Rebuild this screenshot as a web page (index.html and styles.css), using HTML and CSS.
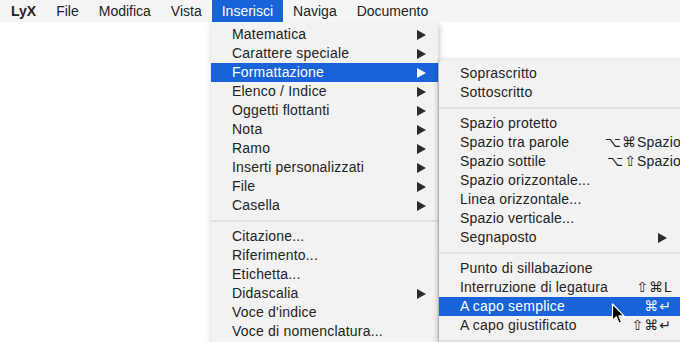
FILE: index.html
```html
<!DOCTYPE html>
<html>

<head>
  <meta charset="UTF-8">
  <title>LyX - Inserisci</title>
  <link rel="stylesheet" href="styles.css">
</head>

<body>
  <div class="menubar">
    <span class="mb-item app">LyX</span>
    <span class="mb-item">File</span>
    <span class="mb-item">Modifica</span>
    <span class="mb-item">Vista</span>
    <span class="mb-item open">Inserisci</span>
    <span class="mb-item">Naviga</span>
    <span class="mb-item">Documento</span>
  </div>

  <div class="stage">
    <div class="menu main">
      <div class="item sub">Matematica</div>
      <div class="item sub">Carattere speciale</div>
      <div class="item sub active">Formattazione
        <div class="menu submenu">
          <div class="item">Soprascritto</div>
          <div class="item">Sottoscritto</div>
          <div class="sep"></div>
          <div class="item">Spazio protetto</div>
          <div class="item">Spazio tra parole <span class="sc long"><span class="glyph">⌥⌘</span>Spazio</span></div>
          <div class="item">Spazio sottile <span class="sc long"><span class="glyph">⌥⇧</span>Spazio</span></div>
          <div class="item">Spazio orizzontale...</div>
          <div class="item">Linea orizzontale...</div>
          <div class="item">Spazio verticale...</div>
          <div class="item sub">Segnaposto</div>
          <div class="sep"></div>
          <div class="item">Punto di sillabazione</div>
          <div class="item">Interruzione di legatura <span class="sc"><span class="glyph">⇧⌘</span>L</span></div>
          <div class="item active">A capo semplice <span class="sc"><span class="glyph">⌘↵</span></span></div>
          <div class="item">A capo giustificato <span class="sc"><span class="glyph">⇧⌘↵</span></span></div>
          <div class="sep"></div>
        </div>
      </div>
      <div class="item sub">Elenco / Indice</div>
      <div class="item sub">Oggetti flottanti</div>
      <div class="item sub">Nota</div>
      <div class="item sub">Ramo</div>
      <div class="item sub">Inserti personalizzati</div>
      <div class="item sub">File</div>
      <div class="item sub">Casella</div>
      <div class="sep"></div>
      <div class="item">Citazione...</div>
      <div class="item">Riferimento...</div>
      <div class="item">Etichetta...</div>
      <div class="item sub">Didascalia</div>
      <div class="item">Voce d'indice</div>
      <div class="item">Voce di nomenclatura...</div>
    </div>

    <svg class="cursor" width="16" height="24" viewBox="0 0 16 24">
      <path d="M1.5 1 L1.5 17.5 L5.3 13.8 L8 20.3 L10.6 19.2 L8 12.9 L13 12.9 Z" fill="#000" stroke="#fff" stroke-width="1.2" stroke-linejoin="round" />
    </svg>
  </div>
</body>

</html>
```

FILE: styles.css
```css
* {
  box-sizing: border-box;
}

body {
  margin: 0;
  font-family: "Liberation Sans", Arial, sans-serif;
  font-size: 14px;
  letter-spacing: 0.2px;
  color: #242424;
  background: #fff;
  width: 680px;
  height: 342px;
  overflow: hidden;
}

.menubar {
  display: flex;
  height: 22px;
  padding-left: 1px;
  background: #f5f5f5;
  letter-spacing: 0;
}

.mb-item {
  padding: 0 10px;
  line-height: 22px;
  white-space: nowrap;
}

.mb-item.app {
  font-weight: bold;
}

.mb-item.open {
  background: #1763d7;
  color: #fff;
}

.stage {
  position: relative;
  height: 320px;
  overflow: hidden;
}

.menu {
  position: absolute;
  background: #f2f2f2;
  padding: 3px 0;
  overflow: hidden;
}

.menu.main {
  left: 211px;
  top: 0;
  width: 227px;
  height: 320px;
  overflow: visible;
  box-shadow: 1px 2px 6px rgba(0, 0, 0, 0.25);
}

.menu.submenu {
  left: 228px;
  top: -3px;
  width: 245px;
  height: 282px;
  padding: 4px 0;
  border-radius: 4px 0 0 0;
  color: #242424;
  box-shadow: -1px 1px 5px rgba(0, 0, 0, 0.3);
}

.item {
  position: relative;
  display: flex;
  align-items: center;
  height: 19px;
  line-height: 19px;
  padding: 0 12px 0 21px;
  white-space: nowrap;
}

.item.active {
  background: #1763d7;
  color: #fff;
}

.main > .item.active > .submenu .item:not(.active) {
  color: #242424;
}

.item.sub::after {
  content: "";
  margin-left: auto;
  border-left: 9px solid #2b2b2b;
  border-top: 5px solid transparent;
  border-bottom: 5px solid transparent;
}

.main > .item.active::after {
  border-left-color: #fff;
}

.submenu .item.sub::after {
  border-left-color: #2b2b2b;
  margin-right: 5px;
}

.sc {
  margin-left: auto;
}

.sc.long {
  margin-right: -9px;
}

.glyph {
  font-family: "DejaVu Sans", sans-serif;
  font-size: 14px;
  letter-spacing: 1px;
}

.sep {
  height: 12px;
  display: flex;
  align-items: center;
}

.sep::before {
  content: "";
  flex: 1;
  height: 2px;
  background: #e1e1e1;
}

.cursor {
  position: absolute;
  left: 611px;
  top: 281px;
}
```
